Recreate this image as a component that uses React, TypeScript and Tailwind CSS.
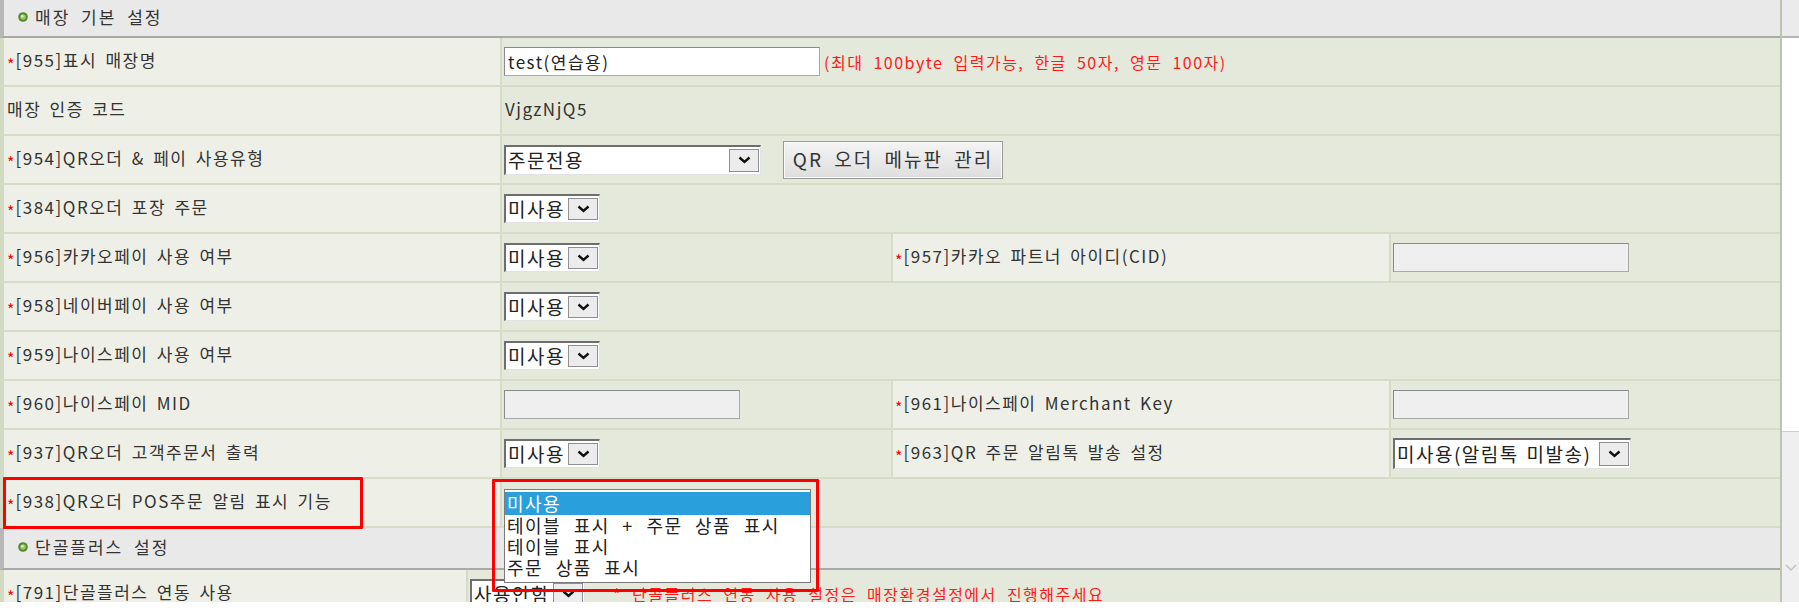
import type { ReactNode } from "react";

const ROW = "grid shrink-0 h-[49px] border-b-2 border-[#d7dcc9]";
const COLS4 = "grid-cols-[500px_391px_498px_1fr]";
const LABEL1 = "flex items-center bg-[#eef0e7] border-l-4 border-[#d3dac4] pl-[3px] pb-[3px]";
const LABEL3 = "flex items-center bg-[#eef0e7] border-l-2 border-[#d7dcc9] pl-[2px] pb-[3px]";
const VALUE = "flex items-center bg-[#e5e9dc] border-l-2 border-[#d7dcc9] pl-[2px]";

const Chevron = () => (
  <svg width="13" height="8" viewBox="0 0 13 8">
    <polyline points="1.5,1.5 6.5,6 11.5,1.5" fill="none" stroke="#111" strokeWidth="2.4" />
  </svg>
);

const Bullet = () => (
  <svg width="10" height="10" viewBox="0 0 10 10">
    <circle cx="5" cy="5" r="4.8" fill="#558a2a" />
    <circle cx="5" cy="5" r="2.8" fill="#9cc46a" />
    <circle cx="4.3" cy="4.2" r="1.3" fill="#e0f0cc" />
  </svg>
);

const Label = ({ code, text, req = true }: { code?: string; text: string; req?: boolean }) => (
  <span className="flex items-center whitespace-nowrap">
    {req && <span className="text-[#ff0000] text-[16px] leading-none mt-[7px] mr-[1px] tracking-normal">*</span>}
    {code && <span>[{code}]</span>}
    {text}
  </span>
);

const Select = ({ value, w, h = "h-[29px]" }: { value: string; w: string; h?: string }) => (
  <div className={`flex ${w} ${h} bg-white border-t-2 border-l-2 border-[#6e6e6e] border-r border-b border-r-[#e2e2e2] border-b-[#e2e2e2]`}>
    <span className="flex-1 flex items-center pl-[2px] text-[19px] text-[#222] tracking-[1.5px] whitespace-nowrap overflow-hidden [word-spacing:2px]">
      {value}
    </span>
    <div className="shrink-0 my-[2px] mr-[1px] w-[30px] flex items-center justify-center bg-[#ececec] border border-[#8f8f8f]">
      <Chevron />
    </div>
  </div>
);

const TextBox = ({ value, w, disabled }: { value?: string; w: string; disabled?: boolean }) => (
  <div
    className={`flex items-center ${w} h-[29px] pl-[3px] text-[17px] text-[#222] border border-[#a9a9a9] border-t-[#8a8a8a] border-l-[#8a8a8a] ${
      disabled ? "bg-[#efefef]" : "bg-white"
    }`}
  >
    {value}
  </div>
);

const Section = ({ title, h }: { title: string; h: string }) => (
  <div className={`flex shrink-0 items-center gap-[7px] ${h} text-[17px] tracking-[2px] [word-spacing:5px] bg-[#e9e9e9] border-l-4 border-l-[#b7b7b7] border-b-2 border-b-[#a9a9a9] pl-[14px] pb-[3px]`}>
    <Bullet />
    <span>{title}</span>
  </div>
);

const Row = ({ label, children }: { label: ReactNode; children: ReactNode }) => (
  <div className={`${ROW} ${COLS4}`}>
    <div className={LABEL1}>{label}</div>
    <div className={`${VALUE} col-span-3`}>{children}</div>
  </div>
);

const Row4 = ({ label, value, label2, value2 }: { label: ReactNode; value: ReactNode; label2: ReactNode; value2: ReactNode }) => (
  <div className={`${ROW} ${COLS4}`}>
    <div className={LABEL1}>{label}</div>
    <div className={VALUE}>{value}</div>
    <div className={LABEL3}>{label2}</div>
    <div className={VALUE}>{value2}</div>
  </div>
);

const Scrollbar = () => (
  <div className="w-[17px] shrink-0 flex flex-col">
    <div className="h-[38px] shrink-0 bg-[#ebebeb] border-b-2 border-[#b3b3b3]" />
    <div className="h-[394px] shrink-0 bg-white border-b border-[#cfcfcf]" />
    <div className="flex-1 flex flex-col justify-end items-center pb-[30px] bg-[#efefef]">
      <svg width="12" height="8" viewBox="0 0 12 8">
        <polyline points="1,1 6,6 11,1" fill="none" stroke="#c2c2c2" strokeWidth="1.5" />
      </svg>
    </div>
  </div>
);

export default function App() {
  return (
    <div className="w-[1799px] h-[614px] bg-white font-['Noto_Sans_CJK_KR','Noto_Sans',sans-serif] text-[17px] text-[#333] tracking-[1.5px] [word-spacing:3px]">
      <div className="relative flex h-[602px] overflow-hidden">
        <div className="w-[1782px] shrink-0 flex flex-col border-r-2 border-[#bcc3b0]">
          <Section title="매장 기본 설정" h="h-[38px]" />

          <Row label={<Label code="955" text="표시 매장명" />}>
            <div className="flex items-center gap-[4px]">
              <TextBox value="test(연습용)" w="w-[316px]" />
              <span className="text-[16px] text-[#ff1a1a] [word-spacing:5px]">(최대 100byte 입력가능, 한글 50자, 영문 100자)</span>
            </div>
          </Row>

          <Row label={<Label text="매장 인증 코드" req={false} />}>
            <span className="pl-[1px] pb-[3px]">VjgzNjQ5</span>
          </Row>

          <Row label={<Label code="954" text="QR오더 & 페이 사용유형" />}>
            <div className="flex items-center gap-[22px]">
              <Select value="주문전용" w="w-[257px]" h="h-[30px]" />
              <button className="w-[220px] h-[38px] text-[19px] tracking-[2px] text-[#333] bg-gradient-to-b from-[#f4f4f4] to-[#dedede] border border-[#9a9a9a] shadow-[inset_0_0_0_1px_#fafafa] [word-spacing:5px]">
                QR 오더 메뉴판 관리
              </button>
            </div>
          </Row>

          <Row label={<Label code="384" text="QR오더 포장 주문" />}>
            <Select value="미사용" w="w-[96px]" />
          </Row>

          <Row4
            label={<Label code="956" text="카카오페이 사용 여부" />}
            value={<Select value="미사용" w="w-[96px]" />}
            label2={<Label code="957" text="카카오 파트너 아이디(CID)" />}
            value2={<TextBox w="w-[236px]" disabled />}
          />

          <Row label={<Label code="958" text="네이버페이 사용 여부" />}>
            <Select value="미사용" w="w-[96px]" />
          </Row>

          <Row label={<Label code="959" text="나이스페이 사용 여부" />}>
            <Select value="미사용" w="w-[96px]" />
          </Row>

          <Row4
            label={<Label code="960" text="나이스페이 MID" />}
            value={<TextBox w="w-[236px]" disabled />}
            label2={<Label code="961" text="나이스페이 Merchant Key" />}
            value2={<TextBox w="w-[236px]" disabled />}
          />

          <Row4
            label={<Label code="937" text="QR오더 고객주문서 출력" />}
            value={<Select value="미사용" w="w-[96px]" />}
            label2={<Label code="963" text="QR 주문 알림톡 발송 설정" />}
            value2={<Select value="미사용(알림톡 미발송)" w="w-[238px]" h="h-[31px]" />}
          />

          <Row label={<Label code="938" text="QR오더 POS주문 알림 표시 기능" />}>
            <span />
          </Row>

          <Section title="단골플러스 설정" h="h-[42px]" />

          <div className={`${ROW} grid-cols-[466px_1fr]`}>
            <div className={LABEL1}>
              <Label code="791" text="단골플러스 연동 사용" />
            </div>
            <div className={VALUE}>
              <div className="flex items-center gap-[28px]">
                <Select value="사용안함" w="w-[115px]" />
                <span className="text-[16px] text-[#ff1a1a] [word-spacing:5px]">* 단골플러스 연동 사용 설정은 매장환경설정에서 진행해주세요</span>
              </div>
            </div>
          </div>
        </div>

        <Scrollbar />

        {/* annotation boxes */}
        <div className="absolute left-[3px] top-[477px] w-[360px] h-[52px] border-[3px] border-[#ff0000] rounded-[1px]" />

        {/* open listbox */}
        <div className="absolute left-[504px] top-[489px] w-[307px] h-[94px] bg-white border border-[#7a7a7a] pt-[2px] text-[18px] text-[#222] tracking-[1.5px] [word-spacing:7px]">
          <div className="h-[23px] flex items-center pl-[2px] bg-[#29a0dc] text-white">미사용</div>
          <div className="h-[21px] flex items-center pl-[2px]">테이블 표시 + 주문 상품 표시</div>
          <div className="h-[21px] flex items-center pl-[2px]">테이블 표시</div>
          <div className="h-[21px] flex items-center pl-[2px]">주문 상품 표시</div>
        </div>
        <div className="absolute left-[492px] top-[479px] w-[327px] h-[113px] border-[3px] border-[#ff0000] rounded-[1px]" />
      </div>
    </div>
  );
}
